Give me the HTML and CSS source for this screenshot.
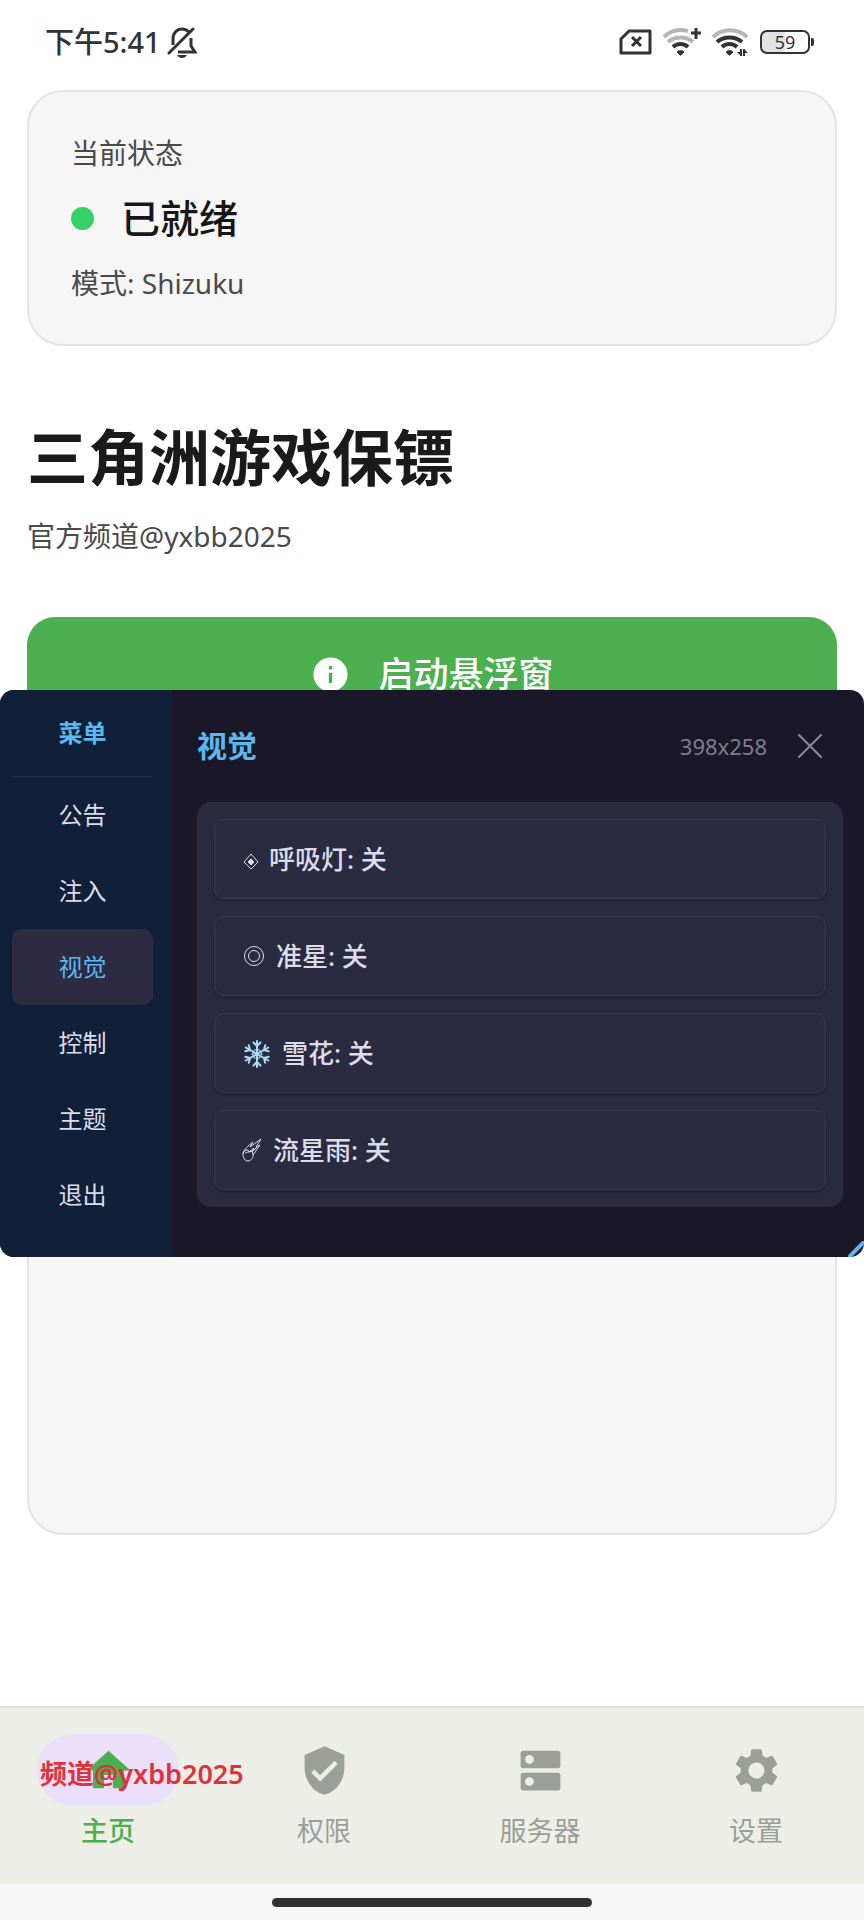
FILE: index.html
```html
<!DOCTYPE html>
<html lang="zh-CN">
<head>
<meta charset="UTF-8">
<meta name="viewport" content="width=device-width, initial-scale=1">
<title>三角洲游戏保镖</title>
<link rel="stylesheet" href="styles.css">
</head>
<body>

<header class="statusbar">
  <div class="time">
    <span>下午5:41</span>
    <svg width="30" height="32" viewBox="0 0 30 32" fill="none" stroke="#333" stroke-width="3">
      <path d="M6 19V13C6 7 10 3 15 3c3 0 5 1 7 3M24 12v8l4 6H11"/>
      <path d="M2 27L26 3" stroke-linecap="round"/>
      <path d="M10 29h10c-1 2-3 3-5 3s-4-1-5-3z" fill="#333" stroke="none"/>
    </svg>
  </div>
  <div class="signals">
    <svg width="34" height="26" viewBox="0 0 34 26" fill="none" stroke="#333" stroke-width="3" stroke-linejoin="round">
      <path d="M10 2h21v22H2V10z"/>
      <path d="M13 8l9 9M22 8l-9 9"/>
    </svg>
    <svg width="40" height="28" viewBox="0 0 40 28" fill="none" stroke-width="4">
      <path d="M2 9C9 2 18 1 26 3M6 14c7-6 18-6 25 0" stroke="#b5b5b5"/>
      <path d="M11 19c4-4 11-4 15 0" stroke="#333"/>
      <path d="M15 24c2-2 5-2 7 0l-3 3h-1z" fill="#333" stroke="#333" stroke-width="1"/>
      <path d="M34 0v11M29 5h10" stroke="#333" stroke-width="3"/>
    </svg>
    <svg width="40" height="28" viewBox="0 0 40 28" fill="none" stroke-width="4">
      <path d="M2 9c9-9 25-9 34 0" stroke="#b5b5b5"/>
      <path d="M6 14c7-6 18-6 25 0M11 19c4-4 11-4 15 0" stroke="#333"/>
      <path d="M15 24c2-2 5-2 7 0l-3 3h-1z" fill="#333" stroke="#333" stroke-width="1"/>
      <path d="M30 21v7M33 21v7" stroke="#333" stroke-width="2"/>
      <path d="M26 24l4 4v-4zM37 25l-4-4v4z" fill="#333"/>
    </svg>
    <div class="battery"><span>59</span></div>
  </div>
</header>

<main>
  <section class="card">
    <p>当前状态</p>
    <p class="state"><i class="dot"></i>已就绪</p>
    <p>模式: Shizuku</p>
  </section>

  <h1>三角洲游戏保镖</h1>
  <p class="channel">官方频道@yxbb2025</p>

  <button class="start" type="button">
    <svg width="41" height="41" viewBox="0 0 24 24" fill="#fff"><path d="M12 2a10 10 0 1 0 0 20 10 10 0 0 0 0-20zm1 15h-2v-6h2v6zm0-8h-2V7h2v2z"/></svg>
    启动悬浮窗
  </button>

  <section class="card log"></section>
</main>

<nav class="tabs">
  <a class="tab active" href="#home">
    <span class="pill"><svg width="53" height="53" viewBox="0 0 24 24"><path d="M10 20v-6h4v6h5v-8h3L12 3 2 12h3v8z"/></svg></span>
    主页
  </a>
  <a class="tab" href="#permission">
    <span class="pill"><svg width="53" height="53" viewBox="0 0 24 24"><path d="M12 1L3 5v6c0 5.550 3.840 10.740 9 12 5.160-1.260 9-6.450 9-12V5l-9-4zm-2 16l-4-4 1.410-1.410L10 14.170l6.590-6.590L18 9l-8 8z"/></svg></span>
    权限
  </a>
  <a class="tab" href="#server">
    <span class="pill"><svg width="53" height="53" viewBox="0 0 24 24"><path d="M20 13H4c-.550 0-1 .450-1 1v6c0 .550.450 1 1 1h16c.550 0 1-.450 1-1v-6c0-.550-.450-1-1-1zM7 19c-1.100 0-2-.900-2-2s.900-2 2-2 2 .900 2 2-.900 2-2 2zM20 3H4c-.550 0-1 .450-1 1v6c0 .550.450 1 1 1h16c.550 0 1-.450 1-1V4c0-.550-.450-1-1-1zM7 9c-1.100 0-2-.900-2-2s.900-2 2-2 2 .900 2 2-.900 2-2 2z"/></svg></span>
    服务器
  </a>
  <a class="tab" href="#settings">
    <span class="pill"><svg width="53" height="53" viewBox="0 0 24 24"><path d="M19.140 12.940c.04-.3.060-.61.060-.94 0-.32-.02-.64-.07-.94l2.030-1.580c.18-.14.230-.41.120-.61l-1.920-3.320c-.12-.22-.37-.29-.59-.22l-2.390.960c-.5-.38-1.030-.7-1.620-.94l-.36-2.540c-.04-.24-.24-.41-.48-.41h-3.840c-.24 0-.43.170-.47.410l-.36 2.540c-.59.240-1.130.570-1.620.940l-2.390-.96c-.22-.08-.47 0-.59.220L2.740 8.870c-.12.210-.08.470.12.610l2.030 1.580c-.05.3-.09.630-.09.940s.02.640.07.940l-2.030 1.580c-.18.140-.23.410-.12.610l1.920 3.320c.12.220.37.290.59.220l2.390-.96c.5.380 1.030.7 1.620.940l.36 2.540c.05.240.24.410.48.410h3.840c.24 0 .44-.17.470-.41l.36-2.540c.59-.24 1.130-.56 1.620-.94l2.390.960c.22.080.47 0 .59-.22l1.920-3.320c.12-.22.070-.47-.12-.61l-2.010-1.580zM12 15.600c-1.980 0-3.600-1.620-3.600-3.600s1.620-3.600 3.600-3.600 3.600 1.620 3.600 3.600-1.620 3.600-3.600 3.600z"/></svg></span>
    设置
  </a>
</nav>
<footer class="gesture"><i></i></footer>

<div class="watermark">频道@yxbb2025</div>

<!-- 悬浮窗 -->
<div class="float">
  <aside>
    <h2>菜单</h2>
    <button type="button">公告</button>
    <button type="button">注入</button>
    <button type="button" class="on">视觉</button>
    <button type="button">控制</button>
    <button type="button">主题</button>
    <button type="button">退出</button>
  </aside>
  <div class="content">
    <div class="head">
      <h2>视觉</h2>
      <span class="size">398x258</span>
      <button type="button" class="close" aria-label="关闭">
        <svg width="24" height="24" viewBox="0 0 24 24" stroke="#8b8b92" stroke-width="2" stroke-linecap="round"><path d="M1 1l22 22M23 1L1 23"/></svg>
      </button>
    </div>
    <div class="list">
      <button type="button">
        <svg width="17" height="26" viewBox="0 0 17 26" fill="none" stroke="#dcdcea"><path d="M9 8l7 8-7 7-7-7z"/><path d="M9 13l3 3-3 3-3-3z" fill="#dcdcea"/></svg>
        呼吸灯: 关
      </button>
      <button type="button">
        <svg width="24" height="26" viewBox="0 0 24 26" fill="none" stroke="#dcdcea"><circle cx="12" cy="13" r="9.500"/><circle cx="12" cy="13" r="5.500"/></svg>
        准星: 关
      </button>
      <button type="button">
        <svg width="30" height="30" viewBox="0 0 30 30" fill="none" stroke="#a9dcf5" stroke-width="2" stroke-linecap="round">
          <g id="arm"><path d="M15 16V3M11.500 4.500L15 8l3.500-3.500"/><path d="M13 11.500l2 1.500 2-1.500" stroke-width="1"/></g>
          <use href="#arm" transform="rotate(60 15 16)"/>
          <use href="#arm" transform="rotate(120 15 16)"/>
          <use href="#arm" transform="rotate(180 15 16)"/>
          <use href="#arm" transform="rotate(240 15 16)"/>
          <use href="#arm" transform="rotate(300 15 16)"/>
        </svg>
        雪花: 关
      </button>
      <button type="button">
        <svg width="21" height="26" viewBox="0 0 21 26" fill="none" stroke="#dcdcea" stroke-linejoin="round"><path d="M1 17c0-3 2-4 5-4l1 2 3-1 1 3c1 3-2 7-5 7s-5-3-5-7z"/><path d="M1 17c1-5 5-8 10-12L8 10l11-8-5 8 4-2-7 10M3 16c2-1 4-1 4-1l5-4-2 4 5-5"/></svg>
        流星雨: 关
      </button>
    </div>
  </div>
  <svg class="grip" width="16" height="16" viewBox="0 0 16 16" stroke="#5db5f2" stroke-width="4"><path d="M0 17L17 0"/></svg>
</div>

</body>
</html>
```
FILE: styles.css
```css
* { box-sizing: border-box; }
body { margin: 0; min-height: 100vh; display: flex; flex-direction: column; position: relative; background: #fff; color: #4a4a4a; font-family: "Noto Sans", "Noto Sans CJK SC", sans-serif; font-size: 28px; line-height: 36px; }
h1, h2, p { margin: 0; }
button { font: inherit; color: inherit; border: none; background: none; padding: 0; cursor: pointer; }
svg { display: block; flex: none; }

.statusbar { height: 84px; padding: 0 54px 0 45px; display: flex; align-items: center; justify-content: space-between; color: #333; }
.time { display: flex; align-items: center; gap: 6px; font-size: 29px; font-weight: 500; }
.signals { display: flex; align-items: center; gap: 9px; }
.battery { position: relative; width: 50px; height: 24px; border: 2px solid #333; border-radius: 7px; background: linear-gradient(90deg, #e2e2e2 50%, #fff 50%); font-size: 18px; line-height: 20px; text-align: center; }
.battery::after { content: ""; position: absolute; right: -6px; top: 6px; width: 3px; height: 8px; border-radius: 0 2px 2px 0; background: #333; }

main { flex: 1; display: flex; flex-direction: column; padding: 6px 27px 171px; }
.card { display: flex; flex-direction: column; gap: 20px; padding: 43px 42px; border: 2px solid #e4e4e4; border-radius: 36px; background: #f6f6f6; }
.state { display: flex; align-items: center; gap: 27px; font-size: 39px; line-height: 54px; font-weight: 500; color: #161616; }
.dot { width: 23px; height: 23px; border-radius: 50%; background: #35d068; }
h1 { margin-top: 76px; font-size: 61px; line-height: 72px; font-weight: 700; color: #1a1a1a; }
.channel { margin-top: 24px; }
.start { display: flex; align-items: center; justify-content: center; gap: 27px; height: 114px; flex: none; margin-top: 63px; border-radius: 28px; background: #4caf50; color: #fff; font-size: 35px; font-weight: 500; }
.log { flex: 1; margin-top: 24px; }

.tabs { display: flex; padding: 26px 0 35px; border-top: 2px solid #dfdfdf; background: #eeeee8; }
.tab { flex: 1; display: flex; flex-direction: column; align-items: center; gap: 7px; color: #9a9f99; font-size: 27px; text-decoration: none; }
.tab svg { fill: currentColor; }
.pill { display: flex; align-items: center; justify-content: center; width: 142px; height: 72px; border-radius: 36px; }
.tab.active { color: #4caf50; font-weight: 500; }
.tab.active .pill { background: #ecdffa; }
.gesture { height: 36px; display: flex; align-items: center; justify-content: center; background: #f7f7f7; }
.gesture i { width: 37%; height: 9px; border-radius: 5px; background: #303030; }
.watermark { position: absolute; left: 40px; bottom: 128px; font-size: 27px; font-weight: 600; color: #e0323c; }

.float { position: absolute; left: 0; right: 0; top: 690px; display: flex; border-radius: 14px; overflow: hidden; background: #1a1828; color: #dcdcea; }
.float h2 { color: #5ab8f0; }
aside { width: 172px; flex: none; display: flex; flex-direction: column; padding: 25px 19px 24px 12px; background: #0f2038; font-size: 24px; }
aside h2 { padding-bottom: 25px; border-bottom: 1px solid #1e2c48; font-size: 24px; font-weight: 700; text-align: center; }
aside button { height: 76px; border-radius: 10px; }
aside .on { background: #2d2b42; color: #5ab8f0; }
.content { flex: 1; padding: 0 21px 50px 25px; }
.head { display: flex; align-items: center; height: 112px; padding-right: 21px; }
.head h2 { flex: 1; font-size: 30px; font-weight: 700; }
.size { font-size: 22px; color: #7e7e8a; }
.close { margin-left: 31px; }
.list { display: flex; flex-direction: column; gap: 17px; padding: 17px; border-radius: 14px; background: #2a2b41; }
.list button { display: flex; align-items: center; gap: 10px; height: 80px; padding: 0 27px; border: 1px solid #393a50; border-radius: 10px; box-shadow: 0 2px 3px rgba(20, 20, 36, .4); font-size: 26px; font-weight: 500; }
.grip { position: absolute; right: 0; bottom: 0; }
```
